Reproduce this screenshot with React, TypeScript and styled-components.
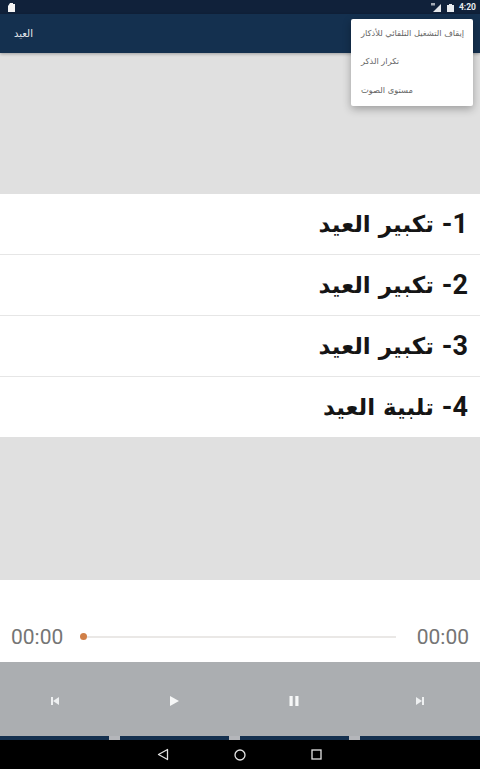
import React from "react";
import styled, { createGlobalStyle } from "styled-components";

const Global = createGlobalStyle`
  html, body { margin: 0; padding: 0; background: #fff; }
  #root { width: 480px; height: 769px; }
`;

const Screen = styled.div`
  position: relative;
  width: 480px;
  height: 769px;
  display: flex;
  flex-direction: column;
  overflow: hidden;
  font-family: "DejaVu Sans", "Liberation Sans", sans-serif;
`;

const StatusBar = styled.div`
  height: 14px;
  background: #10213a;
  display: flex;
  align-items: center;
  justify-content: space-between;
  padding: 0 4px 0 8px;
  color: #fff;
`;

const StatusRight = styled.div`
  display: flex;
  align-items: center;
  gap: 5px;
`;

const Clock = styled.span`
  font: bold 8.5px "Roboto", sans-serif;
  color: #e8ebef;
`;

const AppBar = styled.header`
  height: 39px;
  background: #14304f;
  display: flex;
  align-items: center;
  padding-left: 14px;
  box-shadow: 0 1px 3px rgba(0, 0, 0, 0.3);
  position: relative;
  z-index: 1;
`;

const Title = styled.h1`
  margin: 0;
  font: 400 10px "DejaVu Sans", sans-serif;
  color: #e6eaee;
`;

const Spacer = styled.div<{ $h: number }>`
  height: ${(p) => p.$h}px;
  background: #e0e0e0;
`;

const List = styled.ul`
  list-style: none;
  margin: 0;
  padding: 0;
  background: #fff;
  height: 243px;
  display: flex;
  flex-direction: column;
`;

const Row = styled.li`
  flex: 1;
  display: flex;
  align-items: center;
  justify-content: flex-start;
  gap: 8px;
  padding-right: 12px;
  font: bold 23px "DejaVu Sans", sans-serif;
  color: #151515;
  border-bottom: 1px solid #e6e6e6;
  &:last-child { border-bottom: none; }
`;

const Num = styled.span`
  font: bold 27px "Roboto", sans-serif;
`;

const Player = styled.div`
  height: 82px;
  background: #fff;
  display: flex;
  align-items: center;
  justify-content: space-between;
  padding: 32px 11px 0;
  box-sizing: border-box;
`;

const Time = styled.span`
  font: 400 21px "Roboto", sans-serif;
  color: #757575;
`;

const Track = styled.div`
  flex: 1;
  height: 2px;
  margin: 0 21px 0 18px;
  background: #eae8e6;
  position: relative;
`;

const Thumb = styled.span`
  position: absolute;
  left: -1px;
  top: -3px;
  width: 7px;
  height: 7px;
  border-radius: 50%;
  background: #d07f48;
`;

const Controls = styled.div`
  height: 74px;
  background: #abaeb1;
  display: flex;
  align-items: center;
  gap: 108px;
  padding: 4px 0 0 50px;
  box-sizing: border-box;
  & > svg:last-child { margin-left: 7px; }
`;

const Strip = styled.div`
  height: 4px;
  background: #14304f;
  display: flex;
`;

const Tick = styled.span<{ $x: number }>`
  width: 11px;
  height: 4px;
  background: #b4b6ba;
  margin-left: ${(p) => p.$x}px;
`;

const NavBar = styled.nav`
  height: 29px;
  background: #000;
  display: flex;
  align-items: center;
  justify-content: center;
  gap: 65px;
  padding-right: 2px;
`;

const Menu = styled.div`
  position: absolute;
  top: 19px;
  left: 351px;
  width: 122px;
  height: 87px;
  background: #fff;
  border-radius: 2px;
  box-shadow: 0 3px 8px rgba(0, 0, 0, 0.3);
  display: flex;
  flex-direction: column;
  padding-bottom: 2px;
  box-sizing: border-box;
  z-index: 2;
`;

const MenuItem = styled.div`
  flex: 1;
  display: flex;
  align-items: center;
  justify-content: flex-start;
  padding-left: 10px;
  font: 400 8.3px "DejaVu Sans", sans-serif;
  color: #666;
  white-space: nowrap;
`;

const rows = [
  ["1-", "تكبير العيد"],
  ["2-", "تكبير العيد"],
  ["3-", "تكبير العيد"],
  ["4-", "تلبية العيد"],
];
const menu = ["إيقاف التشغيل التلقائي للأذكار", "تكرار الذكر", "مستوى الصوت"];

export default function App() {
  return (
    <Screen>
      <Global />
      <StatusBar>
        <svg width="7" height="9" viewBox="0 0 7 9" fill="#f4f4f4"><path d="M2 0h3v1h2v8H0V3z" /></svg>
        <StatusRight>
          <svg width="11" height="9" viewBox="0 0 11 9" fill="#e3e6ea"><path d="M10 1v8H2z" /><rect x="0" y="0" width="4" height="2.5" opacity=".7" /></svg>
          <svg width="7" height="9" viewBox="0 0 7 9" fill="#e8ebef"><path d="M2 1h3v1h2v7H0V2h2z" /></svg>
          <Clock>4:20</Clock>
        </StatusRight>
      </StatusBar>
      <AppBar>
        <Title>العيد</Title>
      </AppBar>
      <Spacer $h={141} />
      <List>
        {rows.map(([n, t]) => (
          <Row key={n} dir="rtl"><Num>{n}</Num><span>{t}</span></Row>
        ))}
      </List>
      <Spacer $h={143} />
      <Player>
        <Time>00:00</Time>
        <Track><Thumb /></Track>
        <Time>00:00</Time>
      </Player>
      <Controls>
        <svg width="10" height="10" viewBox="0 0 10 10" fill="#eef0f1"><rect x="1" y="1" width="2" height="8" /><path d="M9 1v8L3 5z" /></svg>
        <svg width="12" height="12" viewBox="0 0 12 12" fill="#f6f7f7"><path d="M2 1l9 5-9 5z" /></svg>
        <svg width="12" height="12" viewBox="0 0 12 12" fill="#f6f7f7"><rect x="1.5" y="1" width="3.2" height="10" /><rect x="7.3" y="1" width="3.2" height="10" /></svg>
        <svg width="10" height="10" viewBox="0 0 10 10" fill="#eef0f1"><rect x="7" y="1" width="2" height="8" /><path d="M1 1v8l6-4z" /></svg>
      </Controls>
      <Strip>
        <Tick $x={109} />
        <Tick $x={109} />
        <Tick $x={109} />
      </Strip>
      <NavBar>
        <svg width="12" height="13" viewBox="0 0 12 13" fill="none" stroke="#e4e4e4" strokeWidth="1.3"><path d="M10.5 1.5v10L1.5 6.5z" strokeLinejoin="round" /></svg>
        <svg width="12" height="12" viewBox="0 0 12 12" fill="none" stroke="#e4e4e4" strokeWidth="1.3"><circle cx="6" cy="6" r="5" /></svg>
        <svg width="11" height="11" viewBox="0 0 11 11" fill="none" stroke="#e4e4e4" strokeWidth="1.3"><rect x="1" y="1" width="9" height="9" /></svg>
      </NavBar>
      <Menu>
        {menu.map((m) => (
          <MenuItem key={m}>{m}</MenuItem>
        ))}
      </Menu>
    </Screen>
  );
}
